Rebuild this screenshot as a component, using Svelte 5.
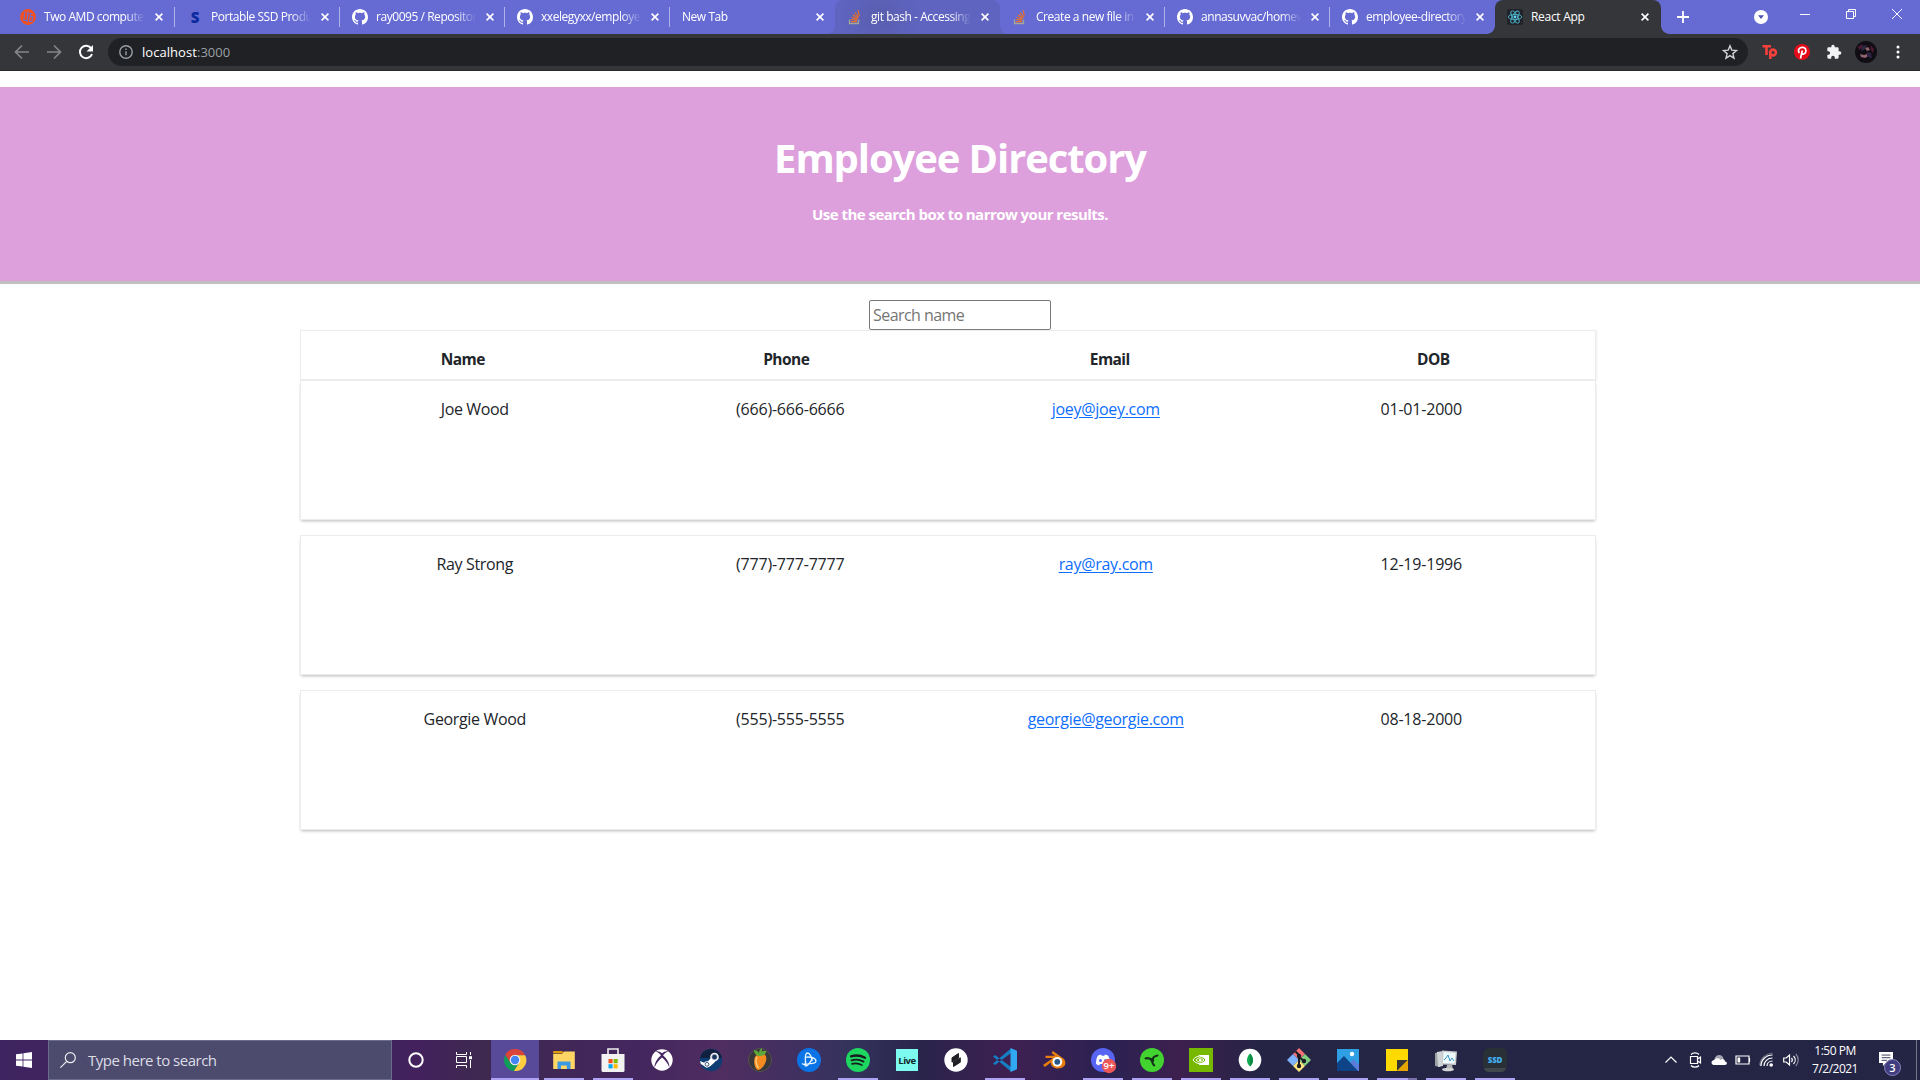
<script>
  const tabs = [
    { title: 'Two AMD compute', icon: 'linus', sep: true, first: true },
    { title: 'Portable SSD Produ', icon: 'samsung', sep: true },
    { title: 'ray0095 / Repositor', icon: 'github', sep: true },
    { title: 'xxelegyxx/employee', icon: 'github', sep: true },
    { title: 'New Tab', icon: null },
    { title: 'git bash - Accessing', icon: 'stack', hover: true },
    { title: 'Create a new file in', icon: 'stack', sep: true },
    { title: 'annasuvvac/homew', icon: 'github', sep: true },
    { title: 'employee-directory', icon: 'github' },
    { title: 'React App', icon: 'react', active: true }
  ];
  const employees = [
    { name: 'Joe Wood', phone: '(666)-666-6666', email: 'joey@joey.com', dob: '01-01-2000' },
    { name: 'Ray Strong', phone: '(777)-777-7777', email: 'ray@ray.com', dob: '12-19-1996' },
    { name: 'Georgie Wood', phone: '(555)-555-5555', email: 'georgie@georgie.com', dob: '08-18-2000' }
  ];
  const apps = [
    { id: 'chrome', open: true, focused: true },
    { id: 'files', open: true },
    { id: 'store', open: true },
    { id: 'xbox' },
    { id: 'steam' },
    { id: 'fruit' },
    { id: 'bnet' },
    { id: 'spotify', open: true },
    { id: 'live' },
    { id: 'splice' },
    { id: 'code', open: true },
    { id: 'blender' },
    { id: 'discord', open: true },
    { id: 'razer', open: true },
    { id: 'nvidia', open: true },
    { id: 'mongo', open: true },
    { id: 'git', open: true },
    { id: 'photos', open: true },
    { id: 'sticky', open: true, stacked: true },
    { id: 'monitor', open: true },
    { id: 'ssd', open: true }
  ];
</script>

{#snippet favicon(id)}
  <svg class="favicon" viewBox="0 0 16 16">
    {#if id === 'linus'}
      <circle cx="8" cy="8" r="7.9" fill="#f4511e" />
      <g fill="none" stroke="#666bd3" stroke-width="1.1">
        <path d="M5 2.5 3.8 11.5h3M8 2.5 7 13.5M8.5 4.5h4M10.5 4.5l-1 8h2.5l.8-5h-2" />
      </g>
    {:else if id === 'samsung'}
      <text x="8" y="13.5" text-anchor="middle" class="s-mark">S</text>
    {:else if id === 'github'}
      <path fill="#fff" d="M8 0C3.58 0 0 3.58 0 8c0 3.54 2.29 6.53 5.47 7.59.4.07.55-.17.55-.38 0-.19-.01-.82-.01-1.49-2.01.37-2.53-.49-2.69-.94-.09-.23-.48-.94-.82-1.13-.28-.15-.68-.52-.01-.53.63-.01 1.08.58 1.23.82.72 1.21 1.87.87 2.33.66.07-.52.28-.87.51-1.07-1.78-.2-3.64-.89-3.64-3.95 0-.87.31-1.59.82-2.15-.08-.2-.36-1.02.08-2.12 0 0 .67-.21 2.2.82.64-.18 1.32-.27 2-.27s1.36.09 2 .27c1.53-1.04 2.2-.82 2.2-.82.44 1.1.16 1.92.08 2.12.51.56.82 1.27.82 2.15 0 3.07-1.87 3.75-3.65 3.95.29.25.54.73.54 1.48 0 1.07-.01 1.93-.01 2.2 0 .21.15.46.55.38A8.01 8.01 0 0 0 16 8c0-4.42-3.58-8-8-8z" />
    {:else if id === 'stack'}
      <path d="M2.5 10.5v4h9v-4" fill="none" stroke="#a5a59a" stroke-width="1.3" />
      <path d="M4 12.6h6M4.1 10.5l6 .7M4.7 8.2l5.7 1.9M6 5.7l4.9 3.4M8 3.5l3.6 4.8M11 1.2l1.3 5.7" fill="none" stroke="#e8702a" stroke-width="1.2" />
    {:else}
      <rect width="16" height="16" rx="2" fill="#20232a" />
      <g fill="none" stroke="#4cb0c8" stroke-width=".9">
        <ellipse cx="8" cy="8" rx="6.8" ry="2.6" />
        <ellipse cx="8" cy="8" rx="6.8" ry="2.6" transform="rotate(60 8 8)" />
        <ellipse cx="8" cy="8" rx="6.8" ry="2.6" transform="rotate(120 8 8)" />
      </g>
      <circle cx="8" cy="8" r="1.4" fill="#61dafb" />
    {/if}
  </svg>
{/snippet}

{#snippet appIcon(id)}
  <svg class="app-icon" viewBox="0 0 24 24">
    {#if id === 'chrome'}
      <path d="M12 1A11 11 0 0 0 2.2 6.8l5.2 8.2L12 7h10.1A11 11 0 0 0 12 1z" fill="#dc4437" />
      <path d="M2.2 6.9A11 11 0 0 0 11 23l5-8.5-8.5.5z" fill="#109d59" />
      <path d="M22.2 7.2H12l4.3 7.3L11 23A11 11 0 0 0 22.2 7.2z" fill="#ffcd40" />
      <circle cx="12" cy="12" r="5.3" fill="#f1f1f1" /><circle cx="12" cy="12" r="4.2" fill="#4385f4" />
    {:else if id === 'files'}
      <path d="M1.2 3h9l1.5 2.5H1.2z" fill="#dd9c09" />
      <path d="M1.2 6h9l1.6-2.5h11V21H1.2z" fill="#ffd563" />
      <path d="M5.5 21v-7.5h13V21h-3.7v-3.5H9V21z" fill="#3c9ae5" />
    {:else if id === 'store'}
      <path d="M7 7V1h10v6" fill="none" stroke="#eee" stroke-width="1.6" />
      <path d="M.5 6h23v16.5a1.5 1.5 0 0 1-1.5 1.5H2a1.5 1.5 0 0 1-1.5-1.5z" fill="#f3f2f3" />
      <path d="M7.5 11H11.6v4.2H7.5z" fill="#f34f1c" /><path d="M12.6 11h4.1v4.2h-4.1z" fill="#7fbc00" />
      <path d="M7.5 16.2h4.1v4.2H7.5z" fill="#01a6f0" /><path d="M12.6 16.2h4.1v4.2h-4.1z" fill="#ffba01" />
    {:else if id === 'xbox'}
      <circle cx="12" cy="12" r="10.7" fill="#fff" />
      <path d="M5.5 3.6C8 2.700 10 3.900 12 5.300 14 3.900 16 2.700 18.500 3.600 16.500 3.800 14.500 5.500 13 7.300c4 3.500 7 8.500 6.300 12.200C18 15.500 15 12 12 9.500 9 12 6 15.500 4.700 19.500 4 15.800 7 10.800 11 7.300 9.500 5.500 7.500 3.800 5.500 3.600z" fill="#452663" />
    {:else if id === 'steam'}
      <circle cx="12" cy="12" r="11.2" fill="#0d3d72" />
      <path d="M1 10a11.2 11.2 0 0 1 22 0z" fill="#11203f" />
      <path d="m1 13 6 2.500 4.500-5 5 3-5 4.500-4 1.500L1.800 16z" fill="#fff" />
      <circle cx="15.5" cy="9" r="4.3" fill="#fff" /><circle cx="15.5" cy="9" r="2.7" fill="#17355f" stroke="#aeb9c7" stroke-width=".6" />
      <circle cx="8" cy="16.3" r="3.1" fill="#fff" /><circle cx="8" cy="16.3" r="1.9" fill="none" stroke="#17355f" stroke-width=".8" />
    {:else if id === 'fruit'}
      <circle cx="12" cy="12" r="11.5" fill="#38383b" stroke="#55504f" />
      <path d="M12 7c5-3 8 2 5.500 7.500C16 18 13 22 10.500 22 7 22 5.500 15 6.500 10.500 7 7.500 9.500 6 12 7z" fill="#f58a20" />
      <path d="M9 9c-2 3-1 8 1.500 11" fill="none" stroke="#ffd078" stroke-width="1.5" />
      <path d="M12 8C9 8 6 6 6 2c2 0 4 1 5 3 0-2 1-4 3-5 0 2 0 3-.5 4 2-1.500 3.500-1.500 5-.5-1 3-3.500 4.500-6.500 4.500z" fill="#5fa83a" />
    {:else if id === 'bnet'}
      <circle cx="12" cy="12" r="12" fill="#0a73e6" />
      <g fill="none" stroke="#e3f4ff" stroke-width="1.300">
        <path d="M9.500 18C7.500 13 8 5 10.500 5c2.200 0 4.500 4.500 4.700 8" />
        <path d="M8 9.500c5-1.500 11 .8 11 3.500 0 2-3.500 3-7 2.500" />
        <path d="M15.500 9c-1 4.500-5 9.500-7 9-1-.3-.7-2.500.5-4.500" />
        <path d="M5 15.500c2 1.500 5 1 7 0" />
      </g>
    {:else if id === 'spotify'}
      <circle cx="12" cy="12" r="12" fill="#1ed760" />
      <path d="M5 8.3c5-1.400 10-.8 14 1.500" fill="none" stroke="#191d20" stroke-width="2.3" stroke-linecap="round" />
      <path d="M5.500 12.300c4.400-1.200 8.600-.7 12 1.300" fill="none" stroke="#191d20" stroke-width="1.9" stroke-linecap="round" />
      <path d="M6 15.900c3.600-.9 7-.5 10 1.200" fill="none" stroke="#191d20" stroke-width="1.6" stroke-linecap="round" />
    {:else if id === 'live'}
      <rect x="1" y="1" width="22" height="22" fill="#7cfbee" />
      <text x="12" y="15.8" text-anchor="middle" class="live-mark">Live</text>
    {:else if id === 'splice'}
      <circle cx="12" cy="12" r="11.7" fill="#fff" />
      <path d="M14.500 5.500v4.500L8 14.200V9.800z M16.300 9.800v4.400L9.500 18.500V14z" fill="#202024" stroke="#202024" stroke-linejoin="round" />
    {:else if id === 'code'}
      <path d="M0 8.500 2 7l16 12v4.500z M0 15.500 2 17 18 5V.5z" fill="#167fc4" />
      <path d="M17.500 0 24 2.800v18.400L17.500 24z" fill="#31a8f2" />
    {:else if id === 'blender'}
      <path d="m1 17 10-7H3.500V7.800H13L9.500 5l1.500-2 11 8c3.500 5 0 9.500-6 9.500-4.500 0-7-2.500-7.300-6L3 19z" fill="#e87d0d" />
      <circle cx="15.300" cy="13.800" r="4.900" fill="#fff" /><circle cx="15.300" cy="13.800" r="2.900" fill="#265787" />
    {:else if id === 'discord'}
      <circle cx="12" cy="12" r="12" fill="#5865f2" />
      <path d="M5 16c0-4 .8-7 2-8.500L10 6.500l.7 1.300h2.600L14 6.500l3 1c1.200 1.500 2 4.500 2 8.500l-3 1.500-1-1.500H9l-1 1.500z" fill="#fff" />
      <circle cx="9.500" cy="12.500" r="1.500" fill="#5865f2" /><circle cx="14.500" cy="12.500" r="1.500" fill="#5865f2" />
      <circle cx="18" cy="18" r="7.2" fill="#ed5758" />
      <text x="18" y="21.200" text-anchor="middle" class="badge-mark">9+</text>
    {:else if id === 'razer'}
      <circle cx="12" cy="12" r="12" fill="#43d330" />
      <path d="M5.500 10.500c2.500-.8 5 0 6.500 2 .7-2.800 2-4.500 5.500-5M12.300 12.500c-.3 2.200.5 3.800 2 5" fill="none" stroke="#142e1a" stroke-width="2" stroke-linecap="round" />
      <circle cx="12.300" cy="12" r="2" fill="#142e1a" />
    {:else if id === 'nvidia'}
      <rect width="24" height="24" fill="#76b900" />
      <path d="M10 7h10v10H10z" fill="#fff" />
      <path d="M4 12c3.500-5 9-5.500 13 0-4 5-9.500 4.500-13 0z" fill="#76b900" stroke="#fff" />
      <path d="M7 12c2.500-3 5-3 8 0-3 2.500-5.500 2.500-8 0z" fill="none" stroke="#fff" />
      <circle cx="11.2" cy="12" r="1.3" fill="#fff" />
    {:else if id === 'mongo'}
      <circle cx="12" cy="12" r="11.3" fill="#fff" />
      <path d="M12 5.500c4 4 4 9.500 0 13-4-3.500-4-9 0-13z" fill="#13aa52" /><path d="M12 5.500c4 4 4 9.500 0 13z" fill="#0c8b44" />
    {:else if id === 'git'}
      <path d="m12 0 6 6-6 6-6-6z" fill="#f37073" /><path d="m6 6 6 6-6 6-6-6z" fill="#80b3ff" />
      <path d="m18 6 6 6-6 6-6-6z" fill="#80d080" /><path d="m12 12 6 6-6 6-6-6z" fill="#ffe680" />
      <path d="M8.500 3.500 12 7v11M12 9l5 4" fill="none" stroke="#1b1b25" stroke-width="2" />
      <circle cx="12" cy="8" r="2.2" fill="#1b1b25" /><circle cx="17" cy="13" r="2.2" fill="#1b1b25" /><circle cx="12" cy="18" r="2.2" fill="#1b1b25" />
    {:else if id === 'photos'}
      <rect x="1" y="1" width="22" height="22" fill="#2f9fe4" />
      <path d="M13 17 17 11l6 6v6h-8z" fill="#5c7cdc" /><path d="M1 15 8 8l14 15H1z" fill="#0f4387" />
      <circle cx="16" cy="6" r="2.2" fill="#fff" />
    {:else if id === 'sticky'}
      <path d="M1 1h22v22H1z" fill="#ffda00" /><path d="M12 12h11L12 23z" fill="#363636" /><path d="M23 12v11H12z" fill="#e6a400" />
    {:else if id === 'monitor'}
      <path d="m1 5 5-1v15l-5-1z" fill="#9da1a3" /><path d="m3 4 6-1v15l-5 1z" fill="#d0d4d4" />
      <path d="m8 2.500 15 1-1 13.500-14.500-.5z" fill="#c8cccd" /><path d="m9.500 4 12 1-.8 10.500L9 15z" fill="#edf9fd" />
      <path d="m10 12 2-2 2-3 2 6 2-3 2 3" fill="none" stroke="#3b96ca" />
      <path d="M13 17h5l1 4.500h-7z" fill="#b1b3b4" /><ellipse cx="14" cy="21.5" rx="6" ry="1.8" fill="#d1d3d3" />
    {:else}
      <rect width="24" height="24" rx="6" fill="#293036" /><path d="M1 20h22c-1 3-2.500 4-5 4H6c-2.500 0-4-1-5-4z" fill="#41484c" />
      <text x="12" y="15" text-anchor="middle" class="ssd-mark">SSD</text>
    {/if}
  </svg>
{/snippet}

<div class="screen">
  <div class="tabstrip">
    {#each tabs as tab}
      <div class="tab" class:first={tab.first} class:active={tab.active} class:hover={tab.hover} class:sep={tab.sep}>
        {#if tab.icon}{@render favicon(tab.icon)}{/if}
        <span class="tab-title">{tab.title}</span>
        <svg class="close" viewBox="0 0 8 8"><path d="m.6.6 6.8 6.8M7.400.6.6 7.400" /></svg>
      </div>
    {/each}
    <svg class="new-tab" viewBox="0 0 12 12"><path d="M6 0v12M0 6h12" /></svg>
    <div class="window-controls">
      <svg class="w-drop" viewBox="0 0 14 14"><circle cx="7" cy="7" r="7" fill="#fff" /><path d="M4 5.200h6L7 9z" fill="#5055ad" /></svg>
      <svg class="w-min" viewBox="0 0 10 10"><path d="M0 5.500h10" /></svg>
      <svg class="w-max" viewBox="0 0 10 10"><path d="M.5 2.500h7v7h-7zM2.500 2.500v-2h7v7h-2" /></svg>
      <svg class="w-close" viewBox="0 0 10 10"><path d="m0 0 10 10M10 0 0 10" /></svg>
    </div>
  </div>

  <div class="toolbar">
    <svg class="nav dim" viewBox="0 0 16 16"><path d="M15 8H2M8 1.500 1.500 8 8 14.500" /></svg>
    <svg class="nav dim" viewBox="0 0 16 16"><path d="M1 8h13M8 1.500 14.500 8 8 14.500" /></svg>
    <svg class="nav reload" viewBox="0 0 16 16"><path d="M13.300 4.500A6.200 6.200 0 1 0 14 10" /><path d="M15 1v6.500H8.500z" class="solid" /></svg>
    <div class="omnibox">
      <svg class="info" viewBox="0 0 14 14"><circle cx="7" cy="7" r="6.2" /><path d="M7 6.200v4M7 3.400v1.500" /></svg>
      <span class="url">localhost<span class="port">:3000</span></span>
      <svg class="star" viewBox="0 0 16 16"><path d="m8 1.800 1.800 4.300 4.700.4-3.600 3.100 1.100 4.600L8 11.700l-4 2.500 1.100-4.600-3.600-3.100 4.700-.4z" /></svg>
    </div>
    <svg class="ext" viewBox="0 0 16 16"><g fill="none" stroke="#f5403c" stroke-width="2.6"><path d="M.5 2.300h8.500M4.500 2v9" /><circle cx="11" cy="8.5" r="2.9" /><path d="M8.300 8v7" /></g></svg>
    <svg class="ext" viewBox="0 0 16 16"><circle cx="8" cy="8" r="8" fill="#e60b19" /><path d="M6.500 14.500 8.300 6.500M5.300 9C3 5.200 6 3.200 8.500 3.300c3 .1 4 2.500 3.100 4.900-.7 2-2.800 2.500-3.900 1.200" fill="none" stroke="#fff" stroke-width="1.7" /></svg>
    <svg class="ext" viewBox="0 0 24 24"><path fill="#f1f3f4" d="M20.500 11H19V7a2 2 0 0 0-2-2h-4V3.500a2.500 2.500 0 0 0-5 0V5H4a2 2 0 0 0-2 2v3.800h1.500a2.700 2.700 0 0 1 0 5.400H2V20a2 2 0 0 0 2 2h3.800v-1.500a2.700 2.700 0 0 1 5.400 0V22H17a2 2 0 0 0 2-2v-4h1.500a2.500 2.500 0 0 0 0-5z" /></svg>
    <svg class="avatar" viewBox="0 0 22 22">
      <circle cx="11" cy="11" r="11" fill="#110d15" />
      <path d="m3 6 4-3 1 3-4 3zM15 4l4 4-1 4-2-3z" fill="#4f1a31" />
      <path d="m10 7 3-1 2 3-3 1zM5 13l4 1 3-1 2 2-4 2-4-1z" fill="#91646f" /><path d="m7 5 5-1-3 5-3 1z" fill="#2c2943" />
      <path d="m12 11 4 1 1 5-5-1z" fill="#2f2343" />
    </svg>
    <svg class="menu" viewBox="0 0 4 14"><circle cx="2" cy="2" r="1.5" /><circle cx="2" cy="7" r="1.5" /><circle cx="2" cy="12" r="1.5" /></svg>
  </div>

  <main>
    <header class="hero">
      <h1>Employee Directory</h1>
      <p>Use the search box to narrow your results.</p>
    </header>
    <input class="search" placeholder="Search name" />
    <section class="directory">
      <div class="head card"><span>Name</span><span>Phone</span><span>Email</span><span>DOB</span></div>
      {#each employees as e}
        <div class="row card">
          <span>{e.name}</span><span class="num">{e.phone}</span>
          <span class="mail"><a href="mailto:{e.email}">{e.email}</a></span><span class="num">{e.dob}</span>
        </div>
      {/each}
    </section>
  </main>

  <footer class="taskbar">
    <div class="start"><svg viewBox="0 0 16 16"><path d="M0 2.300 6.600 1.400v6.200H0zM7.400 1.300 16 0v7.600H7.400zM0 8.400h6.600v6.200L0 13.700zM7.400 8.400H16V16l-8.600-1.300z" /></svg></div>
    <div class="taskbar-search">
      <svg viewBox="0 0 16 16"><circle cx="10.3" cy="5.7" r="5" /><path d="M6.700 9.300.4 15.600" /></svg>
      <span>Type here to search</span>
    </div>
    <div class="slot"><svg class="cortana" viewBox="0 0 16 16"><circle cx="8" cy="8" r="6.7" /></svg></div>
    <div class="slot"><svg class="taskview" viewBox="0 0 16 16"><path d="M.5 0v2.500h10V0M.5 16v-2.500h10V16M.5 4.500h10v6H.5zM14.500 0v3M14.500 8v8" /><path d="M13 4.200h3v3h-3z" fill="#fff" stroke="none" /></svg></div>
    <div class="apps">
      {#each apps as app}
        <div class="app" class:open={app.open} class:focused={app.focused} class:stacked={app.stacked}>{@render appIcon(app.id)}</div>
      {/each}
    </div>
    <div class="tray">
      <svg viewBox="0 0 16 16"><path d="m2.500 10.500 5.500-5.500 5.500 5.500" /></svg>
      <svg viewBox="0 0 16 16"><path d="M3.500 4.500h7v7h-7zM10.500 7l3-2v6l-3-2M4 2.500C6 .3 10 .3 12 2.500M4 13.500c2 2.200 6 2.200 8 0" /></svg>
      <svg viewBox="0 0 16 16"><path d="M3 10C3 6 5 3 8 3c2.500 0 4 1.500 4.500 4z" fill="#a4a5b1" stroke="none" /><path d="M2.500 13c-3-1-2.500-5 1-5C5 5.500 8.500 6 9.500 8c2-2 4.500-.5 4.500 1.500 2.500 0 2.500 3.500 0 3.500z" fill="#fff" stroke="none" /></svg>
      <svg viewBox="0 0 16 16"><path d="M1 4h13v8H1zM14.500 6v4" /><path d="M2.500 5.500h2.700v5H2.500z" fill="#fff" stroke="none" /></svg>
      <svg viewBox="0 0 16 16"><path d="M2 14C2 8 7 3 13.500 3M5 14c0-4.500 3.500-8 8.500-8M8 14c0-3 2.500-5 5.500-5" /><path d="M2 14 .8 12.500C1.500 6.500 7 1.500 13.500 1" opacity=".35" /><circle cx="12.2" cy="13" r="1.8" fill="#fff" stroke="none" /></svg>
      <svg viewBox="0 0 16 16"><path d="M.7 6h2.500L6.500 3v10L3.200 10H.7zM8.500 6c1 1.200 1 2.800 0 4M10.500 4c2.200 2.300 2.200 5.700 0 8" /><path d="M12.800 2c3.200 3.500 3.200 8.500 0 12" opacity=".45" /></svg>
    </div>
    <div class="clock"><span class="time">1:50 PM</span><span>7/2/2021</span></div>
    <div class="notice">
      <svg viewBox="0 0 16 16"><path d="M0 0h16v12.500h-8L4.500 16v-3.500H0z" fill="#fff" /><path d="M3 3.500h10M3 6.500h10M3 9.500h6" stroke="#242545" /></svg>
      <span class="count">3</span>
    </div>
    <div class="peek"></div>
  </footer>
</div>

<style>
  :global(body) { margin: 0; overflow: hidden; background: #fff; }
  .screen { width: 1920px; height: 1080px; display: flex; flex-direction: column; overflow: hidden; font-family: "Open Sans", "Noto Sans", sans-serif; }
  svg { display: block; flex: none; overflow: visible; }

  .tabstrip { display: flex; height: 34px; padding-left: 10px; background: #666bd3; color: #fff; }
  .tab { position: relative; width: 165px; height: 34px; box-sizing: border-box; padding: 0 11px 0 12px; display: flex; align-items: center; gap: 8px; border-radius: 8px 8px 0 0; }
  .tab.first { padding: 0 12px 0 10px; }
  .tab.sep::after { content: ''; position: absolute; right: 0; top: 7px; width: 1px; height: 20px; background: #aeb1ea; }
  .tab.hover { background: radial-gradient(circle at 45px 17px, #5a5eaf 0, #5f64c0 42px); }
  .tab.active { width: 166px; padding-right: 12px; background: #35363a; }
  .tab.active::before, .tab.active::after, .tab.hover::before, .tab.hover::after { content: ''; position: absolute; bottom: 0; width: 8px; height: 8px; }
  .tab::before { left: -8px; background: radial-gradient(circle at 0 0, transparent 7.5px, var(--skirt) 8px); }
  .tab.active::after, .tab.hover::after { right: -8px; background: radial-gradient(circle at 100% 0, transparent 7.5px, var(--skirt) 8px); }
  .tab.active { --skirt: #35363a; }
  .tab.hover { --skirt: #5f64c0; }
  .favicon { width: 16px; height: 16px; }
  .tab-title { flex: 1; min-width: 0; overflow: hidden; white-space: nowrap; font-size: 12px; line-height: 18px; letter-spacing: -.45px; margin-right: 2px; mask-image: linear-gradient(90deg, #000 80%, transparent 100%); }
  .active .tab-title { mask-image: none; letter-spacing: -.3px; }
  .close { width: 8px; height: 8px; }
  .close path { stroke: #fff; stroke-width: 1.6; }
  .s-mark { font: 900 15px "Open Sans", sans-serif; fill: #0b2a9e; }
  .new-tab { width: 12px; height: 12px; margin: 11px 0 0 16px; }
  .new-tab path { stroke: #fff; stroke-width: 1.8; }
  .window-controls { margin-left: auto; padding: 9px 18px 0 0; display: flex; gap: 36px; }
  .window-controls svg { width: 10px; height: 10px; }
  .window-controls .w-drop { width: 14px; height: 14px; margin: 1px -4px 0 0; }
  .window-controls path { fill: none; stroke: #fff; }
  .window-controls .w-drop path { fill: #5055ad; stroke: none; }

  .toolbar { height: 37px; box-sizing: border-box; padding: 0 20px 1px 14px; display: flex; align-items: center; background: #35363a; border-bottom: 1px solid #29292b; }
  .nav { width: 16px; height: 16px; margin-right: 16px; fill: none; stroke: #fff; stroke-width: 2; }
  .nav.dim { stroke: #85868a; stroke-width: 1.7; }
  .nav .solid { fill: #fff; stroke: none; }
  .nav.reload { margin-right: 14px; }
  .omnibox { flex: none; width: 1640px; height: 28px; box-sizing: border-box; padding: 0 10px 0 11px; border-radius: 14px; background: #202124; display: flex; align-items: center; margin-right: 14px; }
  .info { width: 14px; height: 14px; fill: none; stroke: #9aa0a6; stroke-width: 1.4; margin-right: 9px; }
  .url { flex: 1; color: #fff; font-size: 13px; line-height: 20px; letter-spacing: .05px; }
  .port { color: #9aa0a6; }
  .star { width: 16px; height: 16px; fill: none; stroke: #d0d2d5; stroke-width: 1.4; }
  .ext { width: 16px; height: 16px; margin-right: 16px; }
  .avatar { width: 22px; height: 22px; margin-left: -3px; }
  .menu { width: 4px; height: 14px; fill: #fff; margin-left: auto; }

  main { flex: 1; display: flex; flex-direction: column; align-items: center; padding-top: 16px; color: #212529; }
  .hero { width: 100%; height: 197px; box-sizing: border-box; border-bottom: 3px solid #c0c0c0; background: #dda0dd; color: #fff; display: flex; flex-direction: column; align-items: center; font-weight: 700; padding-top: 47px; }
  h1 { margin: 0; font-size: 40px; line-height: 48px; letter-spacing: -1.1px; }
  .hero p { margin: 21px 0 0; font-size: 15px; line-height: 22px; letter-spacing: -.53px; }
  .search { width: 182px; height: 30px; box-sizing: border-box; margin: 16px 0 0; padding: 1px 3px; border: 1px solid #767676; border-radius: 2px; font: 16px/24px "Open Sans", sans-serif; letter-spacing: -.55px; outline: 0; }
  .search::placeholder { color: #757575; }
  .directory { width: 1294px; display: flex; flex-direction: column; gap: 17px; margin: 1px 24px 0 0; }
  .card { display: grid; grid-template-columns: repeat(4, 1fr); box-sizing: border-box; background: #fff; box-shadow: 0 0 0 1px #ececec, 0 2px 3px rgba(0, 0, 0, .28); text-align: center; }
  .head { height: 48px; padding-top: 16px; font-weight: 700; font-size: 15.5px; line-height: 24px; box-shadow: 0 0 0 1px #ececec, 1px 1px 2px 1px #eee; margin-bottom: -15px; letter-spacing: -.55px; }
  .row { height: 138px; padding: 16px; font-size: 16px; line-height: 24px; letter-spacing: -.35px; }
  .num { letter-spacing: -.2px; }
  .mail { letter-spacing: -.3px; }
  a { color: #0d6efd; text-decoration: underline; text-underline-offset: 2px; }

  .taskbar { height: 40px; display: flex; color: #fff; background: linear-gradient(90deg, #3e2460 0, #42215c 420px, #3e2950 480px, #43265e 640px, #502d61 720px, #3f3060 800px, #34335c 850px, #29244b 920px, #3e2052 1010px, #2a2252 1110px, #3d204e 1180px, #252445 1260px, #242545 1920px); }
  .start { width: 48px; display: grid; place-items: center; }
  .start svg { width: 16px; height: 16px; fill: #fff; }
  .taskbar-search { width: 344px; box-sizing: border-box; border: 1px solid #6b6b8b; background: #4c4b6e; display: flex; align-items: center; padding-left: 11px; gap: 12px; font-size: 15px; letter-spacing: -.5px; color: #dddde6; }
  .taskbar-search svg { width: 16px; height: 16px; fill: none; stroke: #eee; stroke-width: 1.2; }
  .slot { width: 48px; display: grid; place-items: center; }
  .slot svg { width: 16px; height: 16px; fill: none; stroke: #fff; }
  .slot .cortana { stroke-width: 2; }
  .apps { display: flex; margin-left: 3px; gap: 1px; }
  .app { position: relative; width: 48px; display: grid; place-items: center; }
  .app.focused { background: #584a98; }
  .app.open::after { content: ''; position: absolute; left: 4px; right: 4px; bottom: 0; height: 2px; background: #aea2f5; }
  .app.focused::after { left: 0; right: 0; }
  .app.stacked::after { background: linear-gradient(90deg, #aea2f5 31px, #7a72ab 31px); }
  .app-icon { width: 24px; height: 24px; }
  .live-mark { font: 700 9.5px "Open Sans", sans-serif; fill: #10272c; letter-spacing: -.5px; }
  .badge-mark { font: 600 9.5px "Open Sans", sans-serif; fill: #fff; }
  .ssd-mark { font: 800 8px "Open Sans", sans-serif; fill: #42aef1; letter-spacing: -.2px; }
  .tray { display: flex; align-items: center; gap: 8px; margin-left: auto; margin-right: 13px; }
  .tray svg { width: 16px; height: 16px; fill: none; stroke: #fff; stroke-width: 1.2; }
  .clock { width: 46px; display: flex; flex-direction: column; align-items: center; font-size: 12px; line-height: 18px; padding-top: 2px; letter-spacing: -.5px; white-space: nowrap; }
  .notice { position: relative; margin: 12px 14px 0 20px; width: 24px; }
  .notice svg { width: 16px; height: 14px; }
  .count { position: absolute; left: 6px; top: 7px; width: 15px; height: 15px; border: 1px solid #8886bd; border-radius: 50%; background: #3f3c80; font-size: 11px; line-height: 15px; font-weight: 600; text-align: center; }
  .peek { width: 3px; border-left: 1px solid #76768a; }
</style>
